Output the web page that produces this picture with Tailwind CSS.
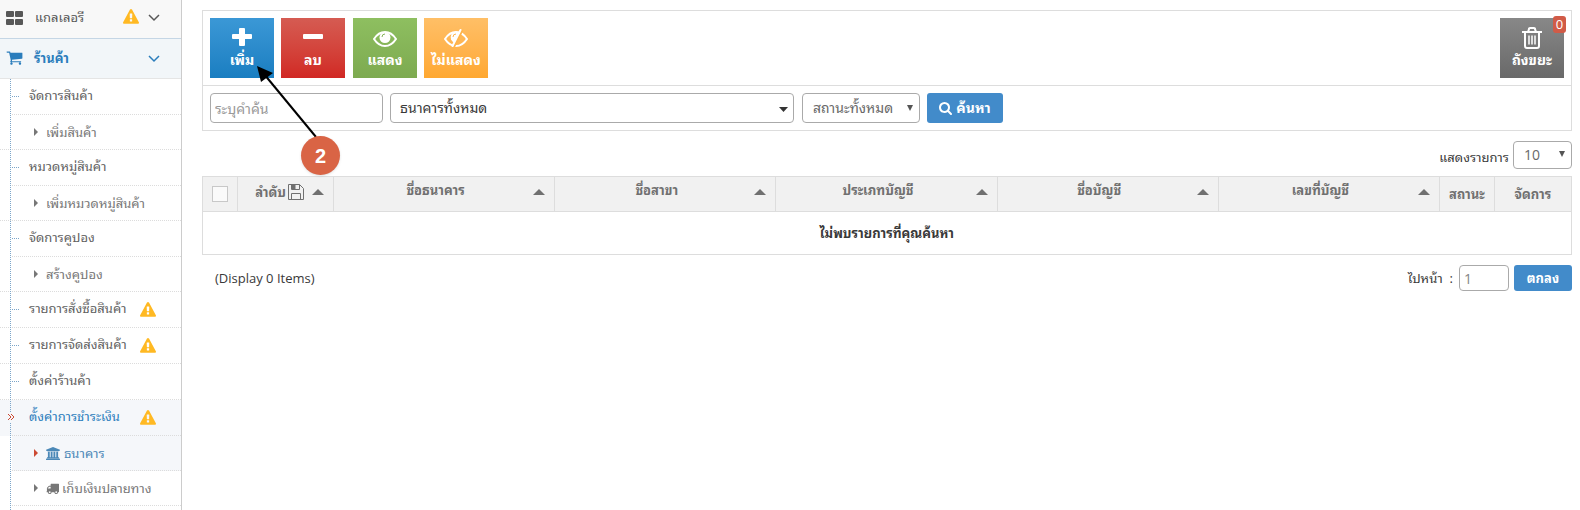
<!DOCTYPE html>
<html lang="th">
<head>
    <meta charset="UTF-8">
    <meta name="viewport" content="width=device-width, initial-scale=1.0">
    <title>ธนาคาร</title>
    <script src="https://cdn.jsdelivr.net/npm/@tailwindcss/browser@4"></script>
</head>
<body class="min-h-screen bg-white font-['Open_Sans','Tahoma','Noto_Sans_Thai_Looped','Loma','Noto_Sans',sans-serif] text-[13px] leading-5 text-[#393939]">
    <!-- Shared icons -->
    <svg class="hidden">
        <symbol id="warning" viewBox="0 0 1792 1792"><path d="M1024 1375v-190q0-14-9.500-23.500t-22.500-9.500h-192q-13 0-22.500 9.500t-9.500 23.500v190q0 14 9.500 23.500t22.500 9.500h192q13 0 22.500-9.500t9.500-23.500zm-2-374l18-459q0-12-10-19-13-11-24-11h-220q-11 0-24 11-10 7-10 21l17 457q0 10 10 16.500t24 6.500h185q14 0 23.500-6.500t10.500-16.500zm-14-934l768 1408q35 63-2 126-17 29-46.500 46t-63.500 17h-1536q-34 0-63.500-17t-46.500-46q-37-63-2-126l768-1408q17-31 47-49t65-18 65 18 47 49z"/></symbol>
        <symbol id="chevron" viewBox="0 0 12 12"><path d="M1 4l5 5 5-5" fill="none" stroke="currentColor" stroke-width="1.5"/></symbol>
        <symbol id="caret-right" viewBox="0 0 4 8"><path d="M0 0l4 4-4 4z"/></symbol>
        <symbol id="sort-up" viewBox="0 0 12 6"><path d="M0 6l6-6 6 6z"/></symbol>
        <symbol id="select-arrow" viewBox="0 0 8 6"><path d="M1 0h6l-3 6z"/></symbol>
    </svg>

    <div class="flex min-h-screen">
        <!-- Sidebar -->
        <nav class="flex w-[182px] shrink-0 flex-col border-r border-[#ccc]">
            <a href="#" class="flex h-[39px] items-center border-b border-[#c5d6e5] bg-[#f8f8f8] pr-[21px] pb-1 pl-[6px] text-[#585858]">
                <svg class="size-[17px]" viewBox="0 0 17 17" fill="currentColor"><path d="M1 1h6q1 0 1 1v4q0 1-1 1H1q-1 0-1-1V2q0-1 1-1zM10 1h6q1 0 1 1v4q0 1-1 1h-6q-1 0-1-1V2q0-1 1-1zM1 9h6q1 0 1 1v4q0 1-1 1H1q-1 0-1-1v-4q0-1 1-1zM10 9h6q1 0 1 1v4q0 1-1 1h-6q-1 0-1-1v-4q0-1 1-1z" transform="translate(0 1)"/></svg>
                <span class="ml-3">แกลเลอรี</span>
                <svg class="ml-auto size-4 fill-[#ffb923]"><use href="#warning"/></svg>
                <svg class="ml-[9px] size-3"><use href="#chevron"/></svg>
            </a>
            <a href="#" class="flex h-10 items-center border-b border-[#e5e5e5] bg-[#f2f6f9] pr-[21px] pb-[2px] pl-[6px] font-bold text-[#2b7dbc]">
                <svg class="size-[17px]" viewBox="0 0 1792 1792" fill="currentColor"><path d="M704 1536q0 52-38 90t-90 38-90-38-38-90 38-90 90-38 90 38 38 90zm896 0q0 52-38 90t-90 38-90-38-38-90 38-90 90-38 90 38 38 90zm128-1088v512q0 24-16.500 42.500t-40.500 21.500l-1044 122q13 60 13 70 0 16-24 64h920q26 0 45 19t19 45-19 45-45 19h-1024q-26 0-45-19t-19-45q0-11 8-31.500t16-36 21.500-40 15.500-29.500l-177-823h-204q-26 0-45-19t-19-45 19-45 45-19h256q16 0 28.500 6.500t19.500 15.500 13 24.500 8 26 5.500 29.500 4.500 26h1201q26 0 45 19t19 45z"/></svg>
                <span class="ml-[11px]">ร้านค้า</span>
                <svg class="ml-auto size-3"><use href="#chevron"/></svg>
            </a>
            <ul class="relative grow text-[#616161] before:absolute before:inset-y-0 before:left-[10px] before:z-10 before:border-l before:border-dotted before:border-[#7ba5c9]">
                <li>
                    <a href="#" class="relative ml-3 flex h-9 items-center border-b border-dotted border-[#dcdcdc] pb-1 pl-[17px] before:absolute before:top-[17px] before:left-0 before:w-[7px] before:border-t before:border-dotted before:border-[#7ba5c9]">จัดการสินค้า</a>
                    <a href="#" class="flex h-[35px] items-center gap-2 border-b border-dotted border-[#dcdcdc] pl-[34px] text-[#777]"><svg class="h-2 w-1 fill-[#777]"><use href="#caret-right"/></svg>เพิ่มสินค้า</a>
                </li>
                <li>
                    <a href="#" class="relative ml-3 flex h-9 items-center border-b border-dotted border-[#dcdcdc] pb-1 pl-[17px] before:absolute before:top-[17px] before:left-0 before:w-[7px] before:border-t before:border-dotted before:border-[#7ba5c9]">หมวดหมู่สินค้า</a>
                    <a href="#" class="flex h-[35px] items-center gap-2 border-b border-dotted border-[#dcdcdc] pl-[34px] text-[#777]"><svg class="h-2 w-1 fill-[#777]"><use href="#caret-right"/></svg>เพิ่มหมวดหมู่สินค้า</a>
                </li>
                <li>
                    <a href="#" class="relative ml-3 flex h-9 items-center border-b border-dotted border-[#dcdcdc] pb-1 pl-[17px] before:absolute before:top-[17px] before:left-0 before:w-[7px] before:border-t before:border-dotted before:border-[#7ba5c9]">จัดการคูปอง</a>
                    <a href="#" class="flex h-[35px] items-center gap-2 border-b border-dotted border-[#dcdcdc] pl-[34px] text-[#777]"><svg class="h-2 w-1 fill-[#777]"><use href="#caret-right"/></svg>สร้างคูปอง</a>
                </li>
                <li class="border-b border-dotted border-[#dcdcdc]">
                    <a href="#" class="relative ml-3 flex h-[35px] items-center justify-between pr-[25px] pb-1 pl-[17px] before:absolute before:top-[17px] before:left-0 before:w-[7px] before:border-t before:border-dotted before:border-[#7ba5c9]">รายการสั่งซื้อสินค้า <svg class="mt-1 size-4 fill-[#ffb923]"><use href="#warning"/></svg></a>
                </li>
                <li class="border-b border-dotted border-[#dcdcdc]">
                    <a href="#" class="relative ml-3 flex h-[35px] items-center justify-between pr-[25px] pb-1 pl-[17px] before:absolute before:top-[17px] before:left-0 before:w-[7px] before:border-t before:border-dotted before:border-[#7ba5c9]">รายการจัดส่งสินค้า <svg class="mt-1 size-4 fill-[#ffb923]"><use href="#warning"/></svg></a>
                </li>
                <li class="border-b border-dotted border-[#dcdcdc]">
                    <a href="#" class="relative ml-3 flex h-[35px] items-center pb-1 pl-[17px] before:absolute before:top-[17px] before:left-0 before:w-[7px] before:border-t before:border-dotted before:border-[#7ba5c9]">ตั้งค่าร้านค้า</a>
                </li>
                <li>
                    <div class="bg-[#f5f7fa]">
                        <a href="#" class="relative ml-3 flex h-9 items-center justify-between border-b border-dotted border-[#dcdcdc] pr-[25px] pb-1 pl-[17px] text-[#2b7dbc]">
                            <svg class="absolute top-3 -left-[5px] z-20 h-[10px] w-[8px] bg-[#f5f7fa]" viewBox="0 0 8 10" fill="none" stroke="#cc4a33"><path d="M1 2l3 3-3 3M4 2l3 3-3 3"/></svg>
                            ตั้งค่าการชำระเงิน <svg class="mt-1 size-4 fill-[#ffb923]"><use href="#warning"/></svg>
                        </a>
                    </div>
                    <a href="#" class="ml-3 flex h-[35px] items-center border-b border-dotted border-[#dcdcdc] bg-[#f5f7fa] pl-[22px] text-[#4b88b7]">
                        <svg class="h-2 w-1 fill-[#cc4a33]"><use href="#caret-right"/></svg>
                        <svg class="mr-1 ml-2 h-[13px] w-[14px]" viewBox="0 0 1920 1792" fill="currentColor"><path d="M960 0l960 384v128h-128q0 26-20.500 45t-48.500 19h-1526q-28 0-48.500-19t-20.500-45h-128v-128zm-704 640h256v768h128v-768h256v768h128v-768h256v768h128v-768h256v768h59q28 0 48.500 19t20.500 45v64h-1664v-64q0-26 20.500-45t48.500-19h59v-768zm1595 960q28 0 48.500 19t20.500 45v128h-1920v-128q0-26 20.500-45t48.500-19h1782z"/></svg>
                        ธนาคาร
                    </a>
                    <a href="#" class="ml-3 flex h-[35px] items-center border-b border-dotted border-[#dcdcdc] pl-[22px] text-[#777]">
                        <svg class="h-2 w-1 fill-[#777]"><use href="#caret-right"/></svg>
                        <svg class="mr-[3px] ml-2 size-[13px]" viewBox="0 0 1792 1792" fill="currentColor"><path d="M640 1408q0-52-38-90t-90-38-90 38-38 90 38 90 90 38 90-38 38-90zm-384-512h384v-256h-158q-13 0-22 9l-195 195q-9 9-9 22v30zm1280 512q0-52-38-90t-90-38-90 38-38 90 38 90 90 38 90-38 38-90zm256-1088v1024q0 15-4 26.500t-13.500 18.500-16.500 11.500-23.500 6-22.500 2-25.500 0-22.500-.5q0 106-75 181t-181 75-181-75-75-181h-384q0 106-75 181t-181 75-181-75-75-181h-64q-3 0-22.500.5t-25.500 0-22.500-2-23.500-6-16.500-11.500-13.500-18.500-4-26.500q0-26 19-45t45-19v-320q0-8-.5-35t0-38 2.500-34.500 6.500-37 14-30.500 22.500-30l198-198q19-19 50.500-32t58.500-13h160v-192q0-26 19-45t45-19h1024q26 0 45 19t19 45z"/></svg>
                        เก็บเงินปลายทาง
                    </a>
                </li>
            </ul>
        </nav>

        <!-- Main content -->
        <main class="relative min-w-0 grow pt-[10px] pr-2 pl-5">
            <section class="border border-[#ddd]">
                <!-- Toolbar -->
                <div class="flex gap-[7px] border-b border-[#ddd] p-[7px] font-bold text-white">
                    <button type="button" class="flex h-[60px] w-16 flex-col items-center bg-linear-to-b from-[#3b98d6] to-[#197ec1] pt-[9px]">
                        <svg class="h-5 w-[22px]" viewBox="0 0 22 20" fill="currentColor"><path d="M9 1h4q1 0 1 1v5h6q1 0 1 1v3q0 1-1 1h-6v6q0 1-1 1H9q-1 0-1-1v-6H2q-1 0-1-1V8q0-1 1-1h6V2q0-1 1-1z"/></svg>
                        <span class="mt-[3px] text-[14px]">เพิ่ม</span>
                    </button>
                    <button type="button" class="flex h-[60px] w-16 flex-col items-center bg-linear-to-b from-[#d55b52] to-[#d12723] pt-[9px]">
                        <svg class="h-5 w-[22px]" viewBox="0 0 22 20" fill="currentColor"><rect x="1" y="7" width="20" height="5" rx="1"/></svg>
                        <span class="mt-[3px] text-[14px]">ลบ</span>
                    </button>
                    <button type="button" class="ml-px flex h-[60px] w-16 flex-col items-center bg-linear-to-b from-[#8ebf60] to-[#7daa50] pt-[9px]">
                        <svg class="h-5 w-6" viewBox="0 0 24 20" fill="none" stroke="currentColor">
                            <path stroke-width="2" d="M1 12q4.500-7 11-7t11 7q-4.500 7-11 7T1 12z"/>
                            <circle cx="12" cy="10.500" r="5.500" fill="currentColor" stroke="none"/>
                            <path stroke="#86b559" d="M9 10q0-3 3-3"/>
                        </svg>
                        <span class="mt-[3px] text-[14px]">แสดง</span>
                    </button>
                    <button type="button" class="flex h-[60px] w-16 flex-col items-center bg-linear-to-b from-[#ffbf66] to-[#ffa830] pt-[9px]">
                        <svg class="h-5 w-6" viewBox="0 0 24 20" fill="none" stroke="currentColor">
                            <path stroke-width="2" d="M1 12q4.500-7 11-7t11 7q-4.500 7-11 7T1 12z"/>
                            <path fill="currentColor" stroke="none" d="M15 5a5.500 5.500 0 1 0-5 10.500z"/>
                            <path stroke="#ffb44b" d="M9 10q0-3 3-3"/>
                            <path stroke="#ffb44b" stroke-width="2" d="M18.500 3L10 20"/>
                            <path stroke-width="2" stroke-linecap="round" d="M16.500 3L8.500 19"/>
                        </svg>
                        <span class="mt-[3px] text-[14px]">ไม่แสดง</span>
                    </button>
                    <button type="button" class="relative ml-auto flex h-[60px] w-16 flex-col items-center bg-linear-to-b from-[#888] to-[#696969] pt-[9px]">
                        <svg class="h-[22px] w-5" viewBox="0 0 20 22" fill="none" stroke="currentColor" stroke-width="2"><path d="M0 5h20M6 5l1-3q0-1 1-1h4q1 0 1 1l1 3M3 5v14q0 2 2 2h10q2 0 2-2V5"/><path stroke-width="1.500" d="M7 8.500v9M10 8.500v9M13 8.500v9"/></svg>
                        <span class="mt-px text-[14px]">ถังขยะ</span>
                        <span class="absolute -top-[2px] -right-[2px] h-[17px] w-[13px] rounded-[3px] bg-[#d15b47] text-center leading-[17px] font-normal">0</span>
                    </button>
                </div>
                <!-- Filters -->
                <form class="flex gap-[7px] p-[7px] text-[14px]">
                    <input type="text" aria-label="ระบุคำค้น" placeholder="ระบุคำค้น" class="h-[30px] w-[173px] rounded border border-[#aaa] px-1 placeholder:text-[#999]">
                    <div class="relative w-[404px]">
                        <select aria-label="ธนาคาร" class="h-[30px] w-full appearance-none rounded border border-[#aaa] px-[9px]"><option>ธนาคารทั้งหมด</option></select>
                        <svg class="pointer-events-none absolute top-[14px] right-[6px] h-[5px] w-[9px]" viewBox="0 0 9 5"><path d="M0 0h9L4.500 5z" fill="#333"/></svg>
                    </div>
                    <div class="relative ml-px w-[118px]">
                        <select aria-label="สถานะ" class="h-[30px] w-full appearance-none rounded border border-[#aaa] px-[10px] text-[#696969]"><option>สถานะทั้งหมด</option></select>
                        <svg class="pointer-events-none absolute top-3 right-[6px] h-[6px] w-2 fill-[#555]"><use href="#select-arrow"/></svg>
                    </div>
                    <button type="submit" class="flex h-[30px] w-[76px] items-center justify-center gap-1 rounded-[3px] bg-[#428bca] font-bold text-white">
                        <svg class="size-[13px]" viewBox="64 128 1664 1664" fill="currentColor"><path d="M1216 832q0-185-131.500-316.500t-316.500-131.500-316.500 131.500-131.500 316.500 131.500 316.500 316.500 131.500 316.500-131.500 131.500-316.500zm512 832q0 52-38 90t-90 38q-54 0-90-38l-343-342q-179 124-399 124-143 0-273.500-55.500t-225-150-150-225-55.500-273.500 55.500-273.500 150-225 225-150 273.500-55.500 273.500 55.500 225 150 150 225 55.500 273.500q0 220-124 399l343 343q37 37 37 90z"/></svg>
                        ค้นหา
                    </button>
                </form>
            </section>

            <div class="mt-[10px] flex items-center justify-end gap-1">
                <label for="page-size" class="pt-1">แสดงรายการ</label>
                <div class="relative w-[59px]">
                    <select id="page-size" class="block h-7 w-full appearance-none rounded border border-[#aaa] px-[10px] text-[14px] text-[#696969]"><option>10</option></select>
                    <svg class="pointer-events-none absolute top-[10px] right-[6px] h-[6px] w-2 fill-[#555]"><use href="#select-arrow"/></svg>
                </div>
            </div>

            <!-- Bank table -->
            <table class="mt-[7px] w-full table-fixed border-collapse text-center">
                <colgroup>
                    <col class="w-[35px]">
                    <col class="w-24">
                    <col><col><col><col><col>
                    <col class="w-[55px]">
                    <col class="w-[77px]">
                </colgroup>
                <thead class="bg-[#f1f1f1] text-[#707070]">
                    <tr class="h-[35px]">
                        <th class="border border-[#ddd]"><input type="checkbox" aria-label="เลือกทั้งหมด" class="mx-auto block size-4 appearance-none border border-[#c8c8c8] bg-[#fafafa]"></th>
                        <th class="border border-[#ddd]"><div class="flex items-center justify-end gap-[2px] pr-[9px] pb-[5px]">ลำดับ<svg class="size-4" viewBox="0 0 16 16" fill="none" stroke="currentColor"><path d="M.5.5h11l4 4v11H.5zM3.500.5v5h8v-5M3.500 15.500v-6h9v6"/><path fill="currentColor" d="M4 1h3v4H4z"/></svg><svg class="ml-[6px] h-[6px] w-3" fill="currentColor"><use href="#sort-up"/></svg></div></th>
                        <th class="border border-[#ddd]"><div class="flex items-center pr-[9px] pb-[5px]"><span class="grow pb-[3px] pl-1">ชื่อธนาคาร</span><svg class="h-[6px] w-3" fill="currentColor"><use href="#sort-up"/></svg></div></th>
                        <th class="border border-[#ddd]"><div class="flex items-center pr-[9px] pb-[5px]"><span class="grow pb-[3px] pl-1">ชื่อสาขา</span><svg class="h-[6px] w-3" fill="currentColor"><use href="#sort-up"/></svg></div></th>
                        <th class="border border-[#ddd]"><div class="flex items-center pr-[9px] pb-[5px]"><span class="grow pb-[3px] pl-1">ประเภทบัญชี</span><svg class="h-[6px] w-3" fill="currentColor"><use href="#sort-up"/></svg></div></th>
                        <th class="border border-[#ddd]"><div class="flex items-center pr-[9px] pb-[5px]"><span class="grow pb-[3px] pl-1">ชื่อบัญชี</span><svg class="h-[6px] w-3" fill="currentColor"><use href="#sort-up"/></svg></div></th>
                        <th class="border border-[#ddd]"><div class="flex items-center pr-[9px] pb-[5px]"><span class="grow pb-[3px] pl-1">เลขที่บัญชี</span><svg class="h-[6px] w-3" fill="currentColor"><use href="#sort-up"/></svg></div></th>
                        <th class="border border-[#ddd]">สถานะ</th>
                        <th class="border border-[#ddd]">จัดการ</th>
                    </tr>
                </thead>
                <tbody>
                    <tr class="h-[43px]"><td colspan="9" class="border border-[#ddd] font-bold">ไม่พบรายการที่คุณค้นหา</td></tr>
                </tbody>
            </table>

            <!-- Pagination -->
            <form class="mt-[10px] flex items-center">
                <span class="ml-[13px]">(Display 0 Items)</span>
                <label for="page" class="ml-auto">ไปหน้า &nbsp;:</label>
                <input id="page" type="text" value="1" class="ml-[6px] h-[26px] w-[50px] rounded border border-[#aaa] px-1 text-[14px] text-[#858585]">
                <button type="submit" class="ml-[5px] h-[26px] w-[58px] rounded-[3px] bg-[#428bca] font-bold text-white">ตกลง</button>
            </form>

            <!-- Step marker pointing at the add button -->
            <svg class="pointer-events-none absolute top-[60px] left-[70px] h-20 w-[70px]" viewBox="0 0 70 80"><path d="M12 14l52 63" stroke="#000" stroke-width="2"/><path d="M5 6l16 7-12 9z"/></svg>
            <div class="absolute top-[136px] left-[119px] flex size-[39px] items-center justify-center rounded-full bg-[#d96445] font-['Liberation_Sans',sans-serif] text-xl font-bold text-white shadow">2</div>
        </main>
    </div>
</body>
</html>
